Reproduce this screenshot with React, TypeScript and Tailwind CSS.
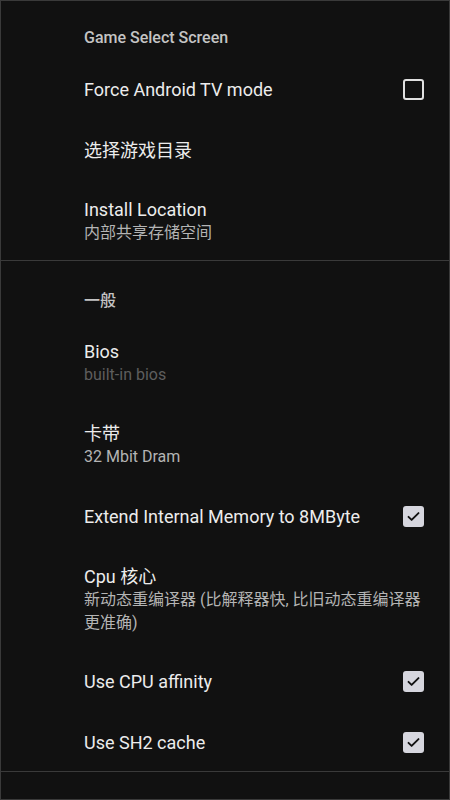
const font = { fontFamily: 'Roboto, "Noto Sans CJK SC", sans-serif' }

function Category({ label, first }: { label: string; first?: boolean }) {
  return (
    <div className={`${first ? 'pt-[27px]' : 'pt-[30px]'} pb-[11px] pl-[83px] text-[16px] leading-[20px] font-medium text-[#c4c4c4]`}>
      {label}
    </div>
  )
}

function CheckBox({ checked }: { checked: boolean }) {
  if (!checked) {
    return <div className="w-[21px] h-[21px] rounded-[3px] border-2 border-[#e0e0e0]" />
  }
  return (
    <div className="w-[21px] h-[21px] rounded-[3px] bg-[#d6d6de] flex items-center justify-center">
      <svg width="15" height="15" viewBox="0 0 24 24" fill="none">
        <path d="M4 12.5l5 5L20 6.5" stroke="#111" strokeWidth="3" strokeLinecap="round" strokeLinejoin="round" />
      </svg>
    </div>
  )
}

function Row({ title, checked }: { title: string; checked?: boolean }) {
  return (
    <div className="flex items-center pl-[83px] pr-[25px] pt-[19px] pb-[19px]">
      <div className="flex-1 text-[18px] leading-[23px] text-[#ececec]">{title}</div>
      {checked !== undefined && <CheckBox checked={checked} />}
    </div>
  )
}

function SummaryRow({ title, summary, dim, pb = 'pb-[18px]' }: { title: string; summary: React.ReactNode; dim?: boolean; pb?: string }) {
  return (
    <div className={`pl-[83px] pr-[20px] pt-[19px] ${pb}`}>
      <div className="text-[18px] leading-[22px] text-[#ececec]">{title}</div>
      <div className={`text-[16px] leading-[23px] ${dim ? 'text-[#5e5e5e]' : 'text-[#b4b4b4]'}`}>{summary}</div>
    </div>
  )
}

export default function App() {
  return (
    <div style={font} className="w-[450px] h-[800px] bg-[#111111] border border-[#3a3a3a] overflow-hidden box-border">
      <Category label="Game Select Screen" first />
      <Row title="Force Android TV mode" checked={false} />
      <div className="pl-[83px] pt-[19px] pb-[18px] text-[18px] leading-[23px] text-[#ececec]">选择游戏目录</div>
      <SummaryRow title="Install Location" summary="内部共享存储空间" pb="pb-[16px]" />
      <div className="h-px bg-[#3a3a3a]" />

      <Category label="一般" />
      <SummaryRow title="Bios" summary="built-in bios" dim />
      <SummaryRow title="卡带" summary="32 Mbit Dram" />
      <Row title="Extend Internal Memory to 8MByte" checked />
      <SummaryRow
        title="Cpu 核心"
        summary={<>新动态重编译器 (比解释器快, 比旧动态重编译器<br />更准确)</>}
        pb="pb-[17px]"
      />
      <Row title="Use CPU affinity" checked />
      <Row title="Use SH2 cache" checked />
      <div className="h-px bg-[#3a3a3a] mt-[-2px]" />
    </div>
  )
}
